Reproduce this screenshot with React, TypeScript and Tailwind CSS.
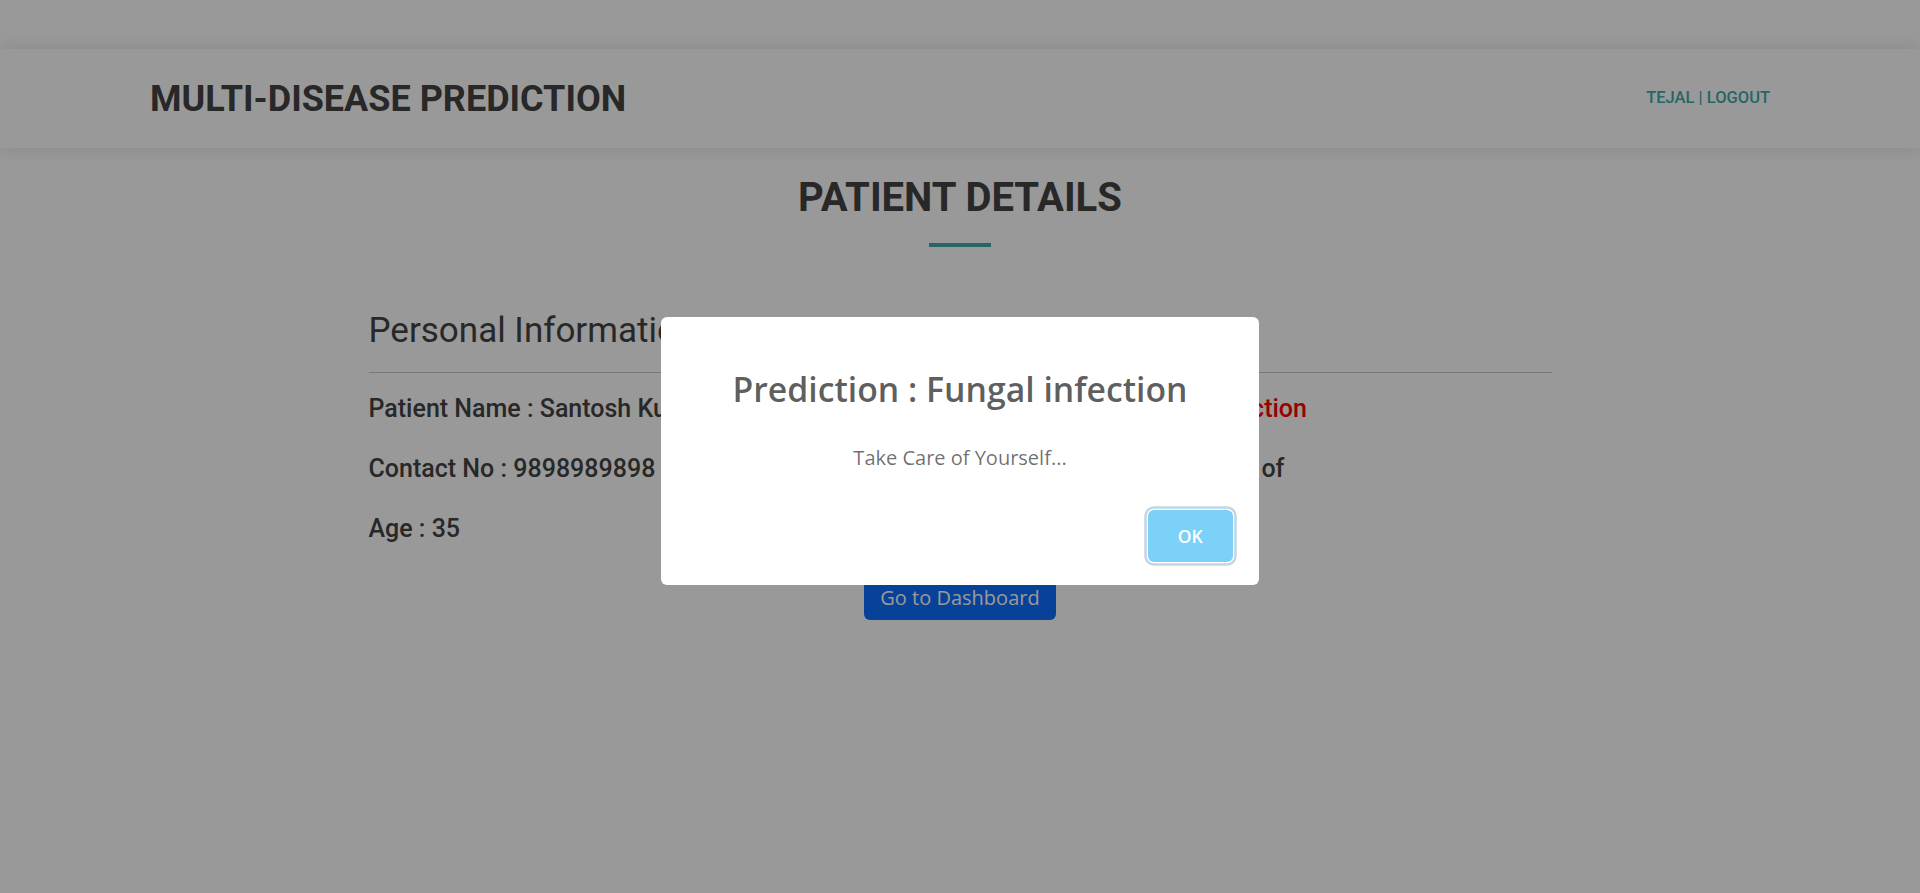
import React from 'react';

const roboto = "font-['Roboto','Liberation_Sans',sans-serif]";
const openSans = "font-['Open_Sans','Liberation_Sans',sans-serif]";

const Header: React.FC = () => (
  <header className="h-[99px] bg-white shadow-[0_0_18px_rgba(0,0,0,0.12)] flex items-center justify-between px-[150px]">
    <h1 className={`${roboto} text-[36px] font-bold text-[#444]`}>MULTI-DISEASE PREDICTION</h1>
    <div className={`${roboto} text-[16.5px] font-medium text-[#40aaad]`}>
      <a href="#">TEJAL</a> | <a href="#">LOGOUT</a>
    </div>
  </header>
);

const PatientDetails: React.FC = () => (
  <main className={`${roboto} text-[#444]`}>
    <div className="mt-[26px] flex flex-col items-center">
      <h2 className="text-[40px] leading-[48px] font-bold">PATIENT DETAILS</h2>
      <div className="mt-[21px] w-[62px] h-[4px] bg-[#40aaad]" />
    </div>

    <section className="w-[1183px] mx-auto mt-[63px]">
      <div className="grid grid-cols-2">
        <h3 className="text-[35px] leading-[42px]">Personal Information</h3>
        <h3 className="text-[35px] leading-[42px]">Disease</h3>
      </div>
      <hr className="mt-[20px] border-0 border-t border-[#c8c8c8]" />

      <div className="grid grid-cols-2 mt-[18px] text-[25px] leading-[36px] font-medium">
        <div className="flex flex-col gap-[24px]">
          <p>Patient Name : Santosh Kumar</p>
          <p>Contact No : 9898989898</p>
          <p>Age : 35</p>
        </div>
        <div className="flex flex-col gap-[24px] whitespace-nowrap">
          <p>
            Disease Type : <span className="text-[#ff0000]">Fungal infection</span>
          </p>
          <p>Precaution : Take due care of</p>
        </div>
      </div>

      <div className="flex justify-center mt-[28px]">
        <button
          className={`${openSans} bg-[#0d6efd] text-white text-[20px] leading-[30px] px-[16.5px] py-[7.5px] rounded-[6px]`}
        >
          Go to Dashboard
        </button>
      </div>
    </section>
  </main>
);

const PredictionAlert: React.FC = () => (
  <div className="fixed inset-0 bg-black/40 flex items-center justify-center">
    <div className={`${openSans} w-[598px] mt-[8.5px] bg-white rounded-[6px] text-center`}>
      <div className="mt-[32.5px] pt-[16.25px] pb-[16.25px] mb-[16.25px] px-[20px] text-[33.75px] leading-[46px] font-semibold text-[rgba(0,0,0,0.65)]">
        Prediction : Fungal infection
      </div>
      <div className="px-[12.5px] text-[20px] leading-[27px] text-[rgba(0,0,0,0.58)]">
        Take Care of Yourself...
      </div>
      <div className="mt-[16.25px] py-[16.25px] px-[20px] text-right">
        <div className="inline-block m-[6.25px]">
          <button className="bg-[#7cd1f9] text-white font-semibold text-[17.5px] leading-[27px] px-[30px] py-[12.5px] rounded-[6px] shadow-[0_0_0_1.25px_#fff,0_0_0_3.75px_rgba(43,114,165,0.29)]">
            OK
          </button>
        </div>
      </div>
    </div>
  </div>
);

export default function App() {
  return (
    <div className="min-h-[893px] bg-white pt-[49px]">
      <Header />
      <PatientDetails />
      <PredictionAlert />
    </div>
  );
}
